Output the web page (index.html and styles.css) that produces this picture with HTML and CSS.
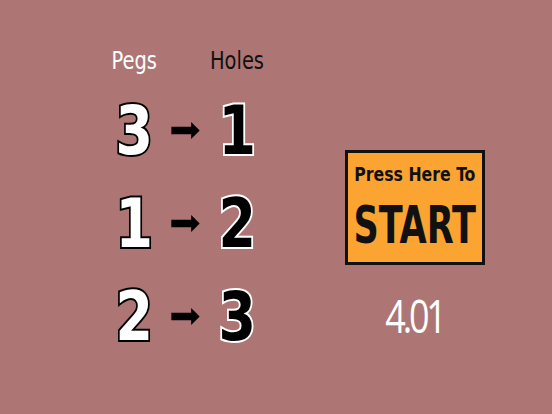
FILE: index.html
```html
<!DOCTYPE html>
<html>
<head>
<meta charset="utf-8">
<link rel="stylesheet" href="styles.css">
</head>
<body>
<main class="screen">
  <section class="pairs">
    <div class="label label-pegs"><span>Pegs</span></div>
    <div></div>
    <div class="label label-holes"><span>Holes</span></div>

    <div class="num peg"><span>3</span></div>
    <svg class="arrow" viewBox="0 0 30 18"><path d="M0 5H21V0L30 9L21 18V13H0Z"/></svg>
    <div class="num hole"><span>1</span></div>

    <div class="num peg"><span>1</span></div>
    <svg class="arrow" viewBox="0 0 30 18"><path d="M0 5H21V0L30 9L21 18V13H0Z"/></svg>
    <div class="num hole"><span>2</span></div>

    <div class="num peg"><span>2</span></div>
    <svg class="arrow" viewBox="0 0 30 18"><path d="M0 5H21V0L30 9L21 18V13H0Z"/></svg>
    <div class="num hole"><span>3</span></div>
  </section>

  <section class="side">
    <button class="start">
      <span class="start-top">Press Here To</span>
      <span class="start-main">START</span>
    </button>
    <div class="timer"><span>4.01</span></div>
  </section>
</main>
</body>
</html>
```

FILE: styles.css
```css
html, body {
  margin: 0;
  padding: 0;
  background: #ad7675;
}

.screen {
  width: 552px;
  height: 414px;
  display: flex;
  font-family: "DejaVu Sans", sans-serif;
  font-stretch: condensed;
}

/* peg → hole table */
.pairs {
  margin-left: 108px;
  margin-top: 44px;
  display: grid;
  grid-template-columns: 52px 51px 52px;
  grid-template-rows: 40px 93px 93px 93px;
  align-items: center;
  justify-items: center;
}

.label {
  align-self: start;
  font-family: "DejaVu Sans", sans-serif;
  font-stretch: condensed;
  font-size: 24px;
  line-height: 34px;
}

.label span,
.num span,
.timer span {
  display: inline-block;
}

.label span { transform: scaleX(0.9); }

.label-pegs { color: #ffffff; }
.label-holes { color: #111111; }

.num {
  font-family: "DejaVu Sans", sans-serif;
  font-stretch: condensed;
  font-weight: bold;
  font-size: 68px;
  line-height: 93px;
  -webkit-text-stroke: 4px;
  paint-order: stroke fill;
}

.num span { transform: scaleX(0.88); }

.peg {
  color: #ffffff;
  -webkit-text-stroke-color: #000000;
}

.hole {
  color: #000000;
  -webkit-text-stroke-color: #ffffff;
}

.arrow {
  width: 29px;
  height: 17px;
  fill: #000000;
}

/* start button and timer */
.side {
  margin-left: 82px;
  margin-top: 150px;
  display: flex;
  flex-direction: column;
  align-items: center;
}

.start {
  width: 140px;
  height: 115px;
  box-sizing: border-box;
  border: 3px solid #111111;
  background: #fba431;
  padding: 0;
  margin: 0;
  display: flex;
  flex-direction: column;
  align-items: center;
  font-family: "DejaVu Sans", sans-serif;
  font-stretch: condensed;
  font-weight: bold;
  color: #111111;
  cursor: pointer;
}

.start-top {
  display: inline-block;
  margin-top: 8px;
  font-size: 19px;
  line-height: 26px;
  transform: scaleX(0.92);
}

.start-main {
  display: inline-block;
  margin-top: 10px;
  font-size: 52px;
  line-height: 56px;
  transform: scaleX(0.75);
}

.timer {
  margin-top: 24px;
  font-family: "Open Sans", sans-serif;
  font-stretch: normal;
  font-weight: 400;
  font-size: 45px;
  line-height: 54px;
  color: #ffffff;
  letter-spacing: -4px;
}

.timer span { transform: scaleX(0.8); }
```
